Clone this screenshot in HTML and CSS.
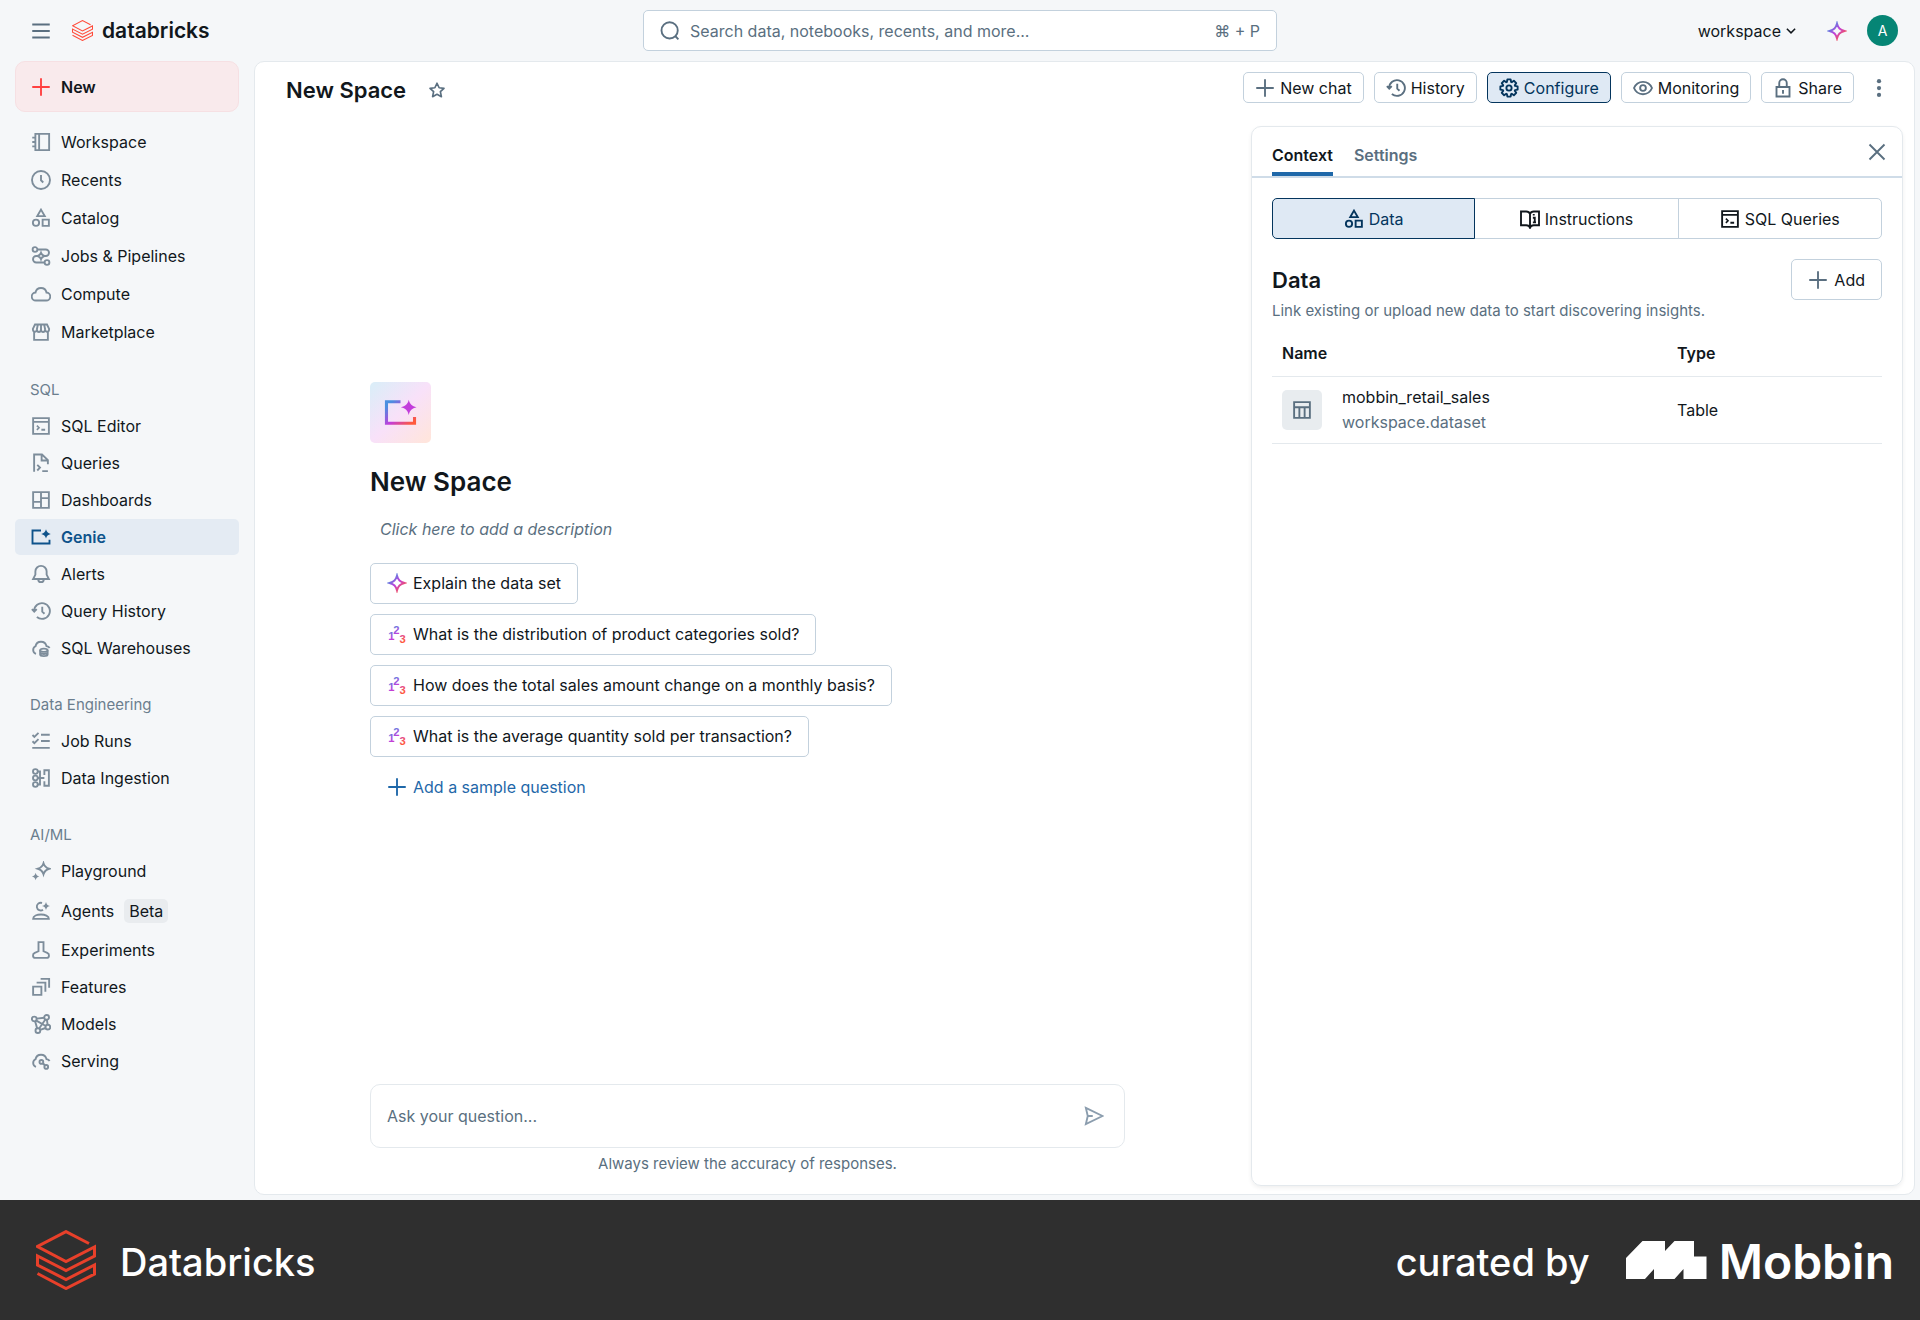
FILE: index.html
```html
<!DOCTYPE html>
<html lang="en">
<head>
<meta charset="utf-8">
<meta name="viewport" content="width=device-width, initial-scale=1">
<title>New Space - Databricks</title>
<link rel="stylesheet" href="styles.css">
</head>
<body>
<svg class="sprite" aria-hidden="true">
  <defs>
    <linearGradient id="ai" gradientUnits="userSpaceOnUse" x1="2" y1="2" x2="14" y2="14">
      <stop offset="0.1" stop-color="#4a8fe0"/><stop offset="0.5" stop-color="#c23ddb"/><stop offset="0.95" stop-color="#ff5a3c"/>
    </linearGradient>
    <symbol id="i-menu" viewBox="0 0 16 16"><path d="M1 2.800h14M1 8h14M1 13.200h14"/></symbol>
    <symbol id="i-brick" viewBox="0 0 60 60"><path stroke-width="3" d="M53 13.500 30 1.600 1.500 16.500 30 31.500 58.500 17v9L30 40.500 1.500 26v9L30 49.500 58.500 35v9L30 58.500 1.500 43.500"/></symbol>
    <symbol id="i-plus" viewBox="0 0 16 16"><path d="M8 1v14M1 8h14"/></symbol>
    <symbol id="i-notebook" viewBox="0 0 16 16"><path d="M3.500 1.500h11v13h-11zM6.500 1.500v13M1 4.500h2.500M1 8h2.500M1 11.500h2.500"/></symbol>
    <symbol id="i-clock" viewBox="0 0 16 16"><circle cx="8" cy="8" r="7.200"/><path d="M8 4v4.200l1.800 1.800"/></symbol>
    <symbol id="i-catalog" viewBox="0 0 16 16"><path d="M8 1.300 11 6.500H5zM9.300 9.300h5v5h-5z"/><circle cx="4" cy="11.800" r="2.500"/></symbol>
    <symbol id="i-jobs" viewBox="0 0 16 16"><circle cx="3.200" cy="2.800" r="1.900"/><circle cx="12.800" cy="13.200" r="1.900"/><path d="M5.100 2.800h6.700a2.600 2.600 0 0 1 0 5.200H11M5 8h-.8a2.600 2.600 0 0 0 0 5.200h6.700M8 5.500c.5 1.400 1.200 2 2.700 2.500-1.500.5-2.200 1.100-2.700 2.500-.5-1.400-1.200-2-2.700-2.500 1.500-.5 2.200-1.100 2.700-2.500z"/></symbol>
    <symbol id="i-cloud" viewBox="0 0 16 16"><path d="M4 13.200a3.200 3.200 0 0 1-.4-6.400 4.500 4.500 0 0 1 8.800 0 3.200 3.200 0 0 1-.4 6.400z"/></symbol>
    <symbol id="i-store" viewBox="0 0 16 16"><path d="M2.500 8v6.300h11V8M3.200 2h9.600l1.700 3.500c0 3-3.200 3-3.200.3 0 2.900-3.300 2.900-3.300 0 0 2.900-3.300 2.900-3.300 0 0 2.700-3.200 2.700-3.200-.3zM5.500 2l-.8 3.800M8 2v3.800M10.500 2l.8 3.800"/></symbol>
    <symbol id="i-editor" viewBox="0 0 16 16"><path d="M1.700 1.700h12.600v12.600H1.700zM1.700 4.700h12.600M8.300 11h3"/><path stroke-width="1.300" d="m4.700 7.700 1.700 1.700-1.700 1.700"/></symbol>
    <symbol id="i-query" viewBox="0 0 16 16"><path d="M2.500 15V1.200h6.300l4.700 4.500V9M8.500 1.500v4.500h4.700M5 9.500l2.200 2.200L5 14M9 14.500h4.500"/></symbol>
    <symbol id="i-dash" viewBox="0 0 16 16"><path d="M1.700 1.700h12.600v12.600H1.700zM8 1.700v12.600M1.700 9.500H8M8 6.500h6.300"/></symbol>
    <symbol id="i-genie" viewBox="0 0 16 16"><path d="M8 2.800H1.200v10.400h13.600v-3"/><path fill="currentColor" stroke="none" d="M12 1.800c.6 2.300 1.500 3 3.800 3.700-2.300.6-3.200 1.400-3.800 3.700-.6-2.300-1.500-3.100-3.800-3.700 2.300-.7 3.200-1.400 3.800-3.700z"/></symbol>
    <symbol id="i-bell" viewBox="0 0 16 16"><path d="M8 1.500a4.500 4.500 0 0 0-4.500 4.500v2.500L1.700 12h12.600l-1.800-3.500V6A4.500 4.500 0 0 0 8 1.500zM5.800 12.300a2.200 2.200 0 0 0 4.400 0"/></symbol>
    <symbol id="i-history" viewBox="0 0 16 16"><path d="M2.500 8a6.300 6.300 0 1 1 2.200 4.800M.7 6.500l1.900 2 2-2M9 4.500v4l1.800 1.700"/></symbol>
    <symbol id="i-warehouse" viewBox="0 0 16 16"><path d="M4 12.700a3.300 3.300 0 0 1-.4-6.100 4.500 4.500 0 0 1 8.800-.1c1.100.2 2 .7 2.500 1.500"/><ellipse cx="10.300" cy="9.800" rx="3" ry="1.300"/><path d="M7.300 9.800v3.400c0 1.700 6 1.700 6 0V9.800M7.300 11.800c.8 1.300 5.200 1.300 6 0"/></symbol>
    <symbol id="i-runs" viewBox="0 0 16 16"><path d="M8 3h7M8 8h7M1 13.500h14M1.200 3.200l1.500 1.500L6 1.500M1.200 8.200l1.500 1.500L6 6.500"/></symbol>
    <symbol id="i-ingest" viewBox="0 0 16 16"><circle cx="3.500" cy="2.800" r="1.900"/><circle cx="3.500" cy="8" r="1.900"/><circle cx="3.500" cy="13.200" r="1.900"/><path d="M5.400 2.800h1.800v10.400H5.400M5.500 8h5.200M10.700 10.500v3.700h3.600V1.800h-3.600v3.700"/></symbol>
    <symbol id="i-play" viewBox="0 0 16 16"><path d="M10 1.800c.8 2.600 1.900 3.600 4.500 4.400-2.600.8-3.700 1.800-4.500 4.400-.8-2.600-1.900-3.600-4.500-4.400 2.600-.8 3.700-1.800 4.500-4.400z"/><path fill="currentColor" stroke="none" d="M3.700 9.300c.5 1.900 1.100 2.500 3 3-1.900.5-2.500 1.100-3 3-.5-1.900-1.100-2.500-3-3 1.900-.5 2.500-1.100 3-3z"/></symbol>
    <symbol id="i-agent" viewBox="0 0 16 16"><path d="M8.800 1.600a3.100 3.100 0 1 0 .8 5.400M1.700 14.300c0-4.700 12.600-4.700 12.600 0z"/><path fill="currentColor" stroke="none" d="M12 .8c.5 2 1.200 2.700 3.200 3.200-2 .5-2.700 1.200-3.200 3.200-.5-2-1.200-2.700-3.200-3.200 2-.5 2.700-1.200 3.200-3.200z"/></symbol>
    <symbol id="i-flask" viewBox="0 0 16 16"><path d="M6 1.700h4V9l3 1.300c2.100 1 1.800 4-.5 4h-9c-2.300 0-2.600-3-.5-4L6 9z"/></symbol>
    <symbol id="i-features" viewBox="0 0 16 16"><path d="M1.700 7.700h6.600v6.600H1.700zM4.500 4.500h7v7.200M7.700 1.500h6.800v7"/></symbol>
    <symbol id="i-models" viewBox="0 0 16 16"><circle cx="2.600" cy="4" r="1.900"/><circle cx="12.500" cy="2.700" r="1.900"/><circle cx="13.500" cy="10.500" r="1.900"/><circle cx="5.500" cy="13.300" r="1.900"/><path d="M4.500 3.700l6.100-.7M12.700 4.600l.6 4M3.300 5.800l1.600 5.700M7.300 12.700l4.400-1.500M4.300 5.300l7.500 4.300M11.500 4.400l-5 7.200"/></symbol>
    <symbol id="i-serving" viewBox="0 0 16 16"><path d="M4 12.700a3.300 3.300 0 0 1-.4-6.100 4.500 4.500 0 0 1 8.800-.1c1.100.2 2 .7 2.500 1.500M9.500 9.800l2 2"/><circle cx="8.300" cy="8.700" r="1.500"/><circle cx="12.200" cy="12.700" r="1.500"/></symbol>
    <symbol id="i-search" viewBox="0 0 16 16"><circle cx="7.700" cy="7.500" r="6.500"/><path d="m12.200 12 2.500 2.700"/></symbol>
    <symbol id="i-down" viewBox="0 0 16 16"><path stroke-width="2" d="m2.500 5 5.500 5.500L13.500 5"/></symbol>
    <symbol id="i-spark" viewBox="0 0 16 16"><path d="M8 2c1 3.700 2.300 5 6 6-3.700 1-5 2.300-6 6-1-3.700-2.300-5-6-6 3.700-1 5-2.300 6-6z"/></symbol>
    <symbol id="i-star" viewBox="0 0 16 16"><path stroke-linejoin="round" d="m8 2 1.900 4 4.300.5-3.200 3 .9 4.400L8 11.800l-3.900 2.100.9-4.400-3.200-3L6.100 6z"/></symbol>
    <symbol id="i-gear" viewBox="0 0 16 16"><circle cx="8" cy="8" r="2.100"/><path stroke-linejoin="round" d="M12.800 6.300 14.900 6.700V9.300L12.800 9.700 12.600 10.200 13.800 11.900 11.900 13.800 10.200 12.600 9.700 12.800 9.300 14.900H6.700L6.300 12.800 5.800 12.600 4.100 13.800 2.200 11.900 3.400 10.200 3.200 9.700 1.100 9.300V6.700L3.200 6.300 3.400 5.800 2.200 4.100 4.100 2.200 5.800 3.400 6.300 3.200 6.700 1.100H9.300L9.700 3.200 10.200 3.400 11.900 2.200 13.800 4.100 12.600 5.800z"/></symbol>
    <symbol id="i-eye" viewBox="0 0 16 16"><path d="M.8 8C3.500 1.400 12.500 1.400 15.200 8 12.500 14.600 3.500 14.600.8 8z"/><circle cx="8" cy="8" r="2.300"/></symbol>
    <symbol id="i-lock" viewBox="0 0 16 16"><path d="M2.800 7.200h10.400v7.600H2.800zM5 7V4a3 3 0 0 1 6 0v3M8 9.500v3"/></symbol>
    <symbol id="i-dots" viewBox="0 0 16 16"><g fill="currentColor" stroke="none"><circle cx="8" cy="2.500" r="1.700"/><circle cx="8" cy="8" r="1.700"/><circle cx="8" cy="13.500" r="1.700"/></g></symbol>
    <symbol id="i-close" viewBox="0 0 16 16"><path d="m2 2 12 12M14 2 2 14"/></symbol>
    <symbol id="i-book" viewBox="0 0 16 16"><path d="M8 4c-.5-1.500-1.500-2-3-2H.8v11H5c1.700 0 2.500.5 3 2 .5-1.500 1.300-2 3-2h4.200V2H11c-1.500 0-2.500.5-3 2zM8 4v11M10.300 7h1.500v3.700M12.800 10.700h-2.500M11 5.200V4"/></symbol>
    <symbol id="i-table" viewBox="0 0 16 16"><path d="M1.700 1.700h12.600v12.600H1.700zM1.700 5.800h12.600M5.900 5.800v8.500M10.100 5.800v8.500"/></symbol>
    <symbol id="i-123" viewBox="0 0 16 16"><g class="digits"><text x="1" y="13">1</text><text x="5" y="8">2</text><text x="10" y="15">3</text></g></symbol>
    <symbol id="i-send" viewBox="0 0 16 16"><path d="M1.500 1.500 14.800 8 1.500 14.500 3 8zM3 8h4"/></symbol>
  </defs>
</svg>

<div class="app">
  <header class="topbar">
    <div class="brand">
      <button class="plain menu" aria-label="Toggle navigation"><svg class="icon"><use href="#i-menu"/></svg></button>
      <a class="logo" href="#"><svg class="icon brick"><use href="#i-brick"/></svg><span>databricks</span></a>
    </div>
    <label class="search">
      <svg class="icon"><use href="#i-search"/></svg>
      <input type="text" aria-label="Search" placeholder="Search data, notebooks, recents, and more...">
      <span>⌘ + P</span>
    </label>
    <div class="account">
      <button class="plain switcher">workspace <svg class="icon tiny"><use href="#i-down"/></svg></button>
      <button class="plain assistant" aria-label="Assistant"><svg class="icon gradient"><use href="#i-spark"/></svg></button>
      <button class="avatar" aria-label="Account">A</button>
    </div>
  </header>

  <div class="body">
    <nav class="sidebar">
      <button class="new"><svg class="icon"><use href="#i-plus"/></svg>New</button>
      <div class="group roomy">
        <a href="#"><svg class="icon"><use href="#i-notebook"/></svg>Workspace</a>
        <a href="#"><svg class="icon"><use href="#i-clock"/></svg>Recents</a>
        <a href="#"><svg class="icon"><use href="#i-catalog"/></svg>Catalog</a>
        <a href="#"><svg class="icon"><use href="#i-jobs"/></svg>Jobs &amp; Pipelines</a>
        <a href="#"><svg class="icon"><use href="#i-cloud"/></svg>Compute</a>
        <a href="#"><svg class="icon"><use href="#i-store"/></svg>Marketplace</a>
      </div>
      <div class="group">
        <h2>SQL</h2>
        <a href="#"><svg class="icon"><use href="#i-editor"/></svg>SQL Editor</a>
        <a href="#"><svg class="icon"><use href="#i-query"/></svg>Queries</a>
        <a href="#"><svg class="icon"><use href="#i-dash"/></svg>Dashboards</a>
        <a href="#" class="current" aria-current="page"><svg class="icon"><use href="#i-genie"/></svg>Genie</a>
        <a href="#"><svg class="icon"><use href="#i-bell"/></svg>Alerts</a>
        <a href="#"><svg class="icon"><use href="#i-history"/></svg>Query History</a>
        <a href="#"><svg class="icon"><use href="#i-warehouse"/></svg>SQL Warehouses</a>
      </div>
      <div class="group">
        <h2>Data Engineering</h2>
        <a href="#"><svg class="icon"><use href="#i-runs"/></svg>Job Runs</a>
        <a href="#"><svg class="icon"><use href="#i-ingest"/></svg>Data Ingestion</a>
      </div>
      <div class="group">
        <h2>AI/ML</h2>
        <a href="#"><svg class="icon"><use href="#i-play"/></svg>Playground</a>
        <a href="#" class="tagged"><svg class="icon"><use href="#i-agent"/></svg>Agents <span class="tag">Beta</span></a>
        <a href="#"><svg class="icon"><use href="#i-flask"/></svg>Experiments</a>
        <a href="#"><svg class="icon"><use href="#i-features"/></svg>Features</a>
        <a href="#"><svg class="icon"><use href="#i-models"/></svg>Models</a>
        <a href="#"><svg class="icon"><use href="#i-serving"/></svg>Serving</a>
      </div>
    </nav>

    <main class="card">
      <div class="titlebar">
        <h1>New Space</h1>
        <button class="plain star" aria-label="Add to favorites"><svg class="icon small"><use href="#i-star"/></svg></button>
        <div class="actions">
          <button class="btn compact"><svg class="icon"><use href="#i-plus"/></svg>New chat</button>
          <button class="btn compact"><svg class="icon"><use href="#i-history"/></svg>History</button>
          <button class="btn compact active" aria-pressed="true"><svg class="icon"><use href="#i-gear"/></svg>Configure</button>
          <button class="btn compact"><svg class="icon"><use href="#i-eye"/></svg>Monitoring</button>
          <button class="btn compact"><svg class="icon"><use href="#i-lock"/></svg>Share</button>
          <button class="plain more" aria-label="More actions"><svg class="icon"><use href="#i-dots"/></svg></button>
        </div>
      </div>

      <div class="workarea">
        <section class="chat">
          <div class="welcome">
            <div class="badge"><svg class="icon gradient"><use href="#i-genie"/></svg></div>
            <h2>New Space</h2>
            <p class="about">Click here to add a description</p>
            <div class="prompts">
              <button class="btn"><svg class="icon gradient"><use href="#i-spark"/></svg>Explain the data set</button>
              <button class="btn"><svg class="icon gradient"><use href="#i-123"/></svg>What is the distribution of product categories sold?</button>
              <button class="btn"><svg class="icon gradient"><use href="#i-123"/></svg>How does the total sales amount change on a monthly basis?</button>
              <button class="btn"><svg class="icon gradient"><use href="#i-123"/></svg>What is the average quantity sold per transaction?</button>
              <button class="btn link"><svg class="icon"><use href="#i-plus"/></svg>Add a sample question</button>
            </div>
          </div>
          <form class="composer">
            <input type="text" aria-label="Question" placeholder="Ask your question...">
            <button type="button" class="plain" aria-label="Send"><svg class="icon"><use href="#i-send"/></svg></button>
          </form>
          <p class="notice">Always review the accuracy of responses.</p>
        </section>

        <aside class="panel">
          <div class="tabs" role="tablist">
            <button class="tab selected" role="tab" aria-selected="true">Context</button>
            <button class="tab" role="tab" aria-selected="false">Settings</button>
            <button class="plain close" aria-label="Close panel"><svg class="icon"><use href="#i-close"/></svg></button>
          </div>
          <div class="panel-body">
            <div class="segments">
              <button class="segment active" aria-pressed="true"><svg class="icon"><use href="#i-catalog"/></svg>Data</button>
              <button class="segment"><svg class="icon"><use href="#i-book"/></svg>Instructions</button>
              <button class="segment"><svg class="icon"><use href="#i-editor"/></svg>SQL Queries</button>
            </div>
            <div class="section-head">
              <h2>Data</h2>
              <button class="btn"><svg class="icon"><use href="#i-plus"/></svg>Add</button>
            </div>
            <p class="hint">Link existing or upload new data to start discovering insights.</p>
            <table>
              <thead><tr><th scope="col">Name</th><th scope="col">Type</th></tr></thead>
              <tbody>
                <tr>
                  <td>
                    <div class="source">
                      <span class="tile"><svg class="icon"><use href="#i-table"/></svg></span>
                      <div><div>mobbin_retail_sales</div><div class="muted">workspace.dataset</div></div>
                    </div>
                  </td>
                  <td>Table</td>
                </tr>
              </tbody>
            </table>
          </div>
        </aside>
      </div>
    </main>
  </div>
</div>

<footer class="credits">
  <svg class="icon credit-logo"><use href="#i-brick"/></svg>
  <span class="credit-name">Databricks</span>
  <span class="curated">curated by</span>
  <svg class="mobbin-mark" viewBox="0 0 81 38" aria-hidden="true"><path d="M0 17 16.500 0H39v10L48.500 0H68v15.500h12.500V38h-23V28L48.500 38H28V28L19 38H0z"/></svg>
  <span class="mobbin">Mobbin</span>
</footer>
</body>
</html>
```
FILE: styles.css
```css
:root {
  --ink: #11171c;
  --muted: #5a6f80;
  --line: #c3d1dd;
  --hairline: #e4e9ed;
  --navy: #04355d;
  --blue: #1f68a9;
  --selected: #dfe9f4;
}

* { box-sizing: border-box; }

body {
  margin: 0;
  min-height: 100vh;
  display: flex;
  flex-direction: column;
  background: #f5f7f9;
  color: var(--ink);
  font: 16px/24px Inter, "Liberation Sans", sans-serif;
}

h1, h2, p { margin: 0; }
button, input { font: inherit; color: inherit; }
button { cursor: pointer; }
a { color: inherit; text-decoration: none; }

.sprite { position: absolute; width: 0; height: 0; }

.icon {
  width: 20px;
  height: 20px;
  flex: none;
  fill: none;
  stroke: currentColor;
  stroke-width: 1.5px;
}
.icon.small { width: 18px; height: 18px; }
.icon.tiny { width: 12px; height: 12px; }
.icon.gradient { stroke: url(#ai); }
.btn .icon.gradient, .gradient { color: #c23ddb; }
.digits {
  font: 700 9px "Liberation Sans", sans-serif;
  fill: url(#ai);
  stroke: none;
}

.plain {
  display: flex;
  align-items: center;
  padding: 0;
  border: 0;
  background: none;
  color: var(--muted);
}

/* Shell */
.app { flex: 1; display: flex; flex-direction: column; }
.body { flex: 1; display: flex; padding: 0 5px 5px 0; }

.topbar {
  height: 61px;
  display: grid;
  grid-template-columns: 1fr minmax(300px, 634px) 1fr;
  align-items: center;
  padding: 0 22px;
}
.brand, .logo, .account { display: flex; align-items: center; }
.brand { gap: 21px; padding-left: 9px; }
.logo { gap: 9px; font-size: 21px; font-weight: 600; }
.brick { width: 21px; height: 21px; color: #ff4b3a; }
.account { justify-content: flex-end; }
.switcher { gap: 4px; color: var(--ink); }
.assistant { margin: 0 20px 0 30px; }
.avatar {
  width: 31px;
  height: 31px;
  padding: 0;
  border: 0;
  border-radius: 50%;
  background: #068575;
  color: #fff;
  font-size: 14px;
}
.search {
  height: 41px;
  display: flex;
  align-items: center;
  gap: 10px;
  padding: 0 16px;
  border: 1px solid var(--line);
  border-radius: 5px;
  background: #fff;
  color: var(--muted);
}
input {
  flex: 1;
  min-width: 0;
  padding: 0;
  border: 0;
  outline: 0;
  background: none;
}
input::placeholder { color: var(--muted); opacity: 1; }

/* Sidebar */
.sidebar { width: 254px; flex: none; padding: 0 15px; }
.sidebar .icon { color: #7d8d9b; }
.sidebar .new .icon { color: #ff4040; }
.new {
  width: 100%;
  height: 51px;
  display: flex;
  align-items: center;
  gap: 10px;
  margin-bottom: 11px;
  padding: 0 15px;
  border: 1px solid #f6e0e3;
  border-radius: 10px;
  background: #f9eaec;
  font-weight: 600;
}
.group a {
  height: 36px;
  display: flex;
  align-items: center;
  gap: 10px;
  margin-bottom: 1px;
  padding: 0 16px;
  border-radius: 5px;
}
.roomy a { height: 38px; margin: 0; }
.group + .group { margin-top: 20px; }
.group h2 {
  padding: 0 15px;
  font-size: 15px;
  font-weight: 400;
  line-height: 37px;
  color: #6b7e8e;
}
.group .current { background: #e4ebf3; color: #0e538b; font-weight: 600; }
.sidebar .current .icon { color: #0e538b; }
.group .tagged { height: 41px; }
.tag { padding: 0 5px; border-radius: 5px; background: #e9ecef; }

/* Main card */
.card {
  flex: 1;
  min-width: 0;
  display: flex;
  flex-direction: column;
  border: 1px solid var(--hairline);
  border-radius: 10px;
  background: #fff;
}
.titlebar {
  height: 64px;
  display: flex;
  align-items: flex-start;
  padding: 10px 25px 0 31px;
}
.titlebar h1 { font-size: 22px; line-height: 36px; font-weight: 600; }
.star { height: 36px; margin-left: 22px; }
.actions { display: flex; gap: 10px; margin-left: auto; }
.more { margin-left: 5px; }

.btn {
  height: 41px;
  display: inline-flex;
  align-items: center;
  gap: 6px;
  padding: 0 16px;
  border: 1px solid var(--line);
  border-radius: 5px;
  background: #fff;
  white-space: nowrap;
}
.btn .icon { color: var(--muted); }
.btn.compact { height: 31px; padding: 0 11px; gap: 5px; }
.btn.active { border-color: var(--navy); background: var(--selected); color: var(--navy); }
.btn.active .icon { color: var(--navy); }
.btn.link { border-color: transparent; color: var(--blue); }
.btn.link .icon { color: var(--blue); }

.workarea { flex: 1; display: flex; gap: 11px; padding: 0 11px 8px 0; }

/* Chat */
.chat {
  flex: 1;
  min-width: 0;
  display: flex;
  flex-direction: column;
  align-items: center;
  padding: 0 20px 10px;
}
.chat > * { width: 100%; max-width: 755px; }
.welcome { flex: 1; display: flex; flex-direction: column; justify-content: center; padding-bottom: 21px; }
.badge {
  width: 61px;
  height: 61px;
  display: grid;
  place-items: center;
  border-radius: 5px;
  background: linear-gradient(135deg, #dcedf8 5%, #f8e1f9 50%, #ffe5dd 95%);
}
.badge .icon { width: 33px; height: 33px; }
.welcome h2 { margin-top: 20px; font-size: 26px; line-height: 38px; font-weight: 600; }
.about { margin: 16px 10px 22px; font-style: italic; color: var(--muted); }
.prompts { display: flex; flex-direction: column; align-items: flex-start; gap: 10px; }
.composer {
  height: 64px;
  display: flex;
  align-items: center;
  padding: 0 20px 0 16px;
  border: 1px solid var(--hairline);
  border-radius: 10px;
}
.composer .icon { color: #8b9dae; }
.notice { margin-top: 4px; font-size: 15px; text-align: center; color: var(--muted); }

/* Configuration panel */
.panel {
  width: 652px;
  flex: none;
  border: 1px solid var(--hairline);
  border-radius: 10px;
  box-shadow: 0 2px 4px #00000010;
}
.tabs {
  height: 51px;
  display: flex;
  gap: 21px;
  padding: 0 15px 0 20px;
  border-bottom: 2px solid #cfdce8;
}
.tab {
  padding: 10px 0 0;
  border: 0;
  border-bottom: 4px solid transparent;
  background: none;
  color: var(--muted);
  font-weight: 600;
}
.tab.selected { border-color: var(--blue); color: var(--ink); }
.close { margin-left: auto; }
.panel-body { padding: 20px; }
.segments { display: grid; grid-template-columns: repeat(3, 1fr); }
.segment {
  height: 41px;
  display: flex;
  align-items: center;
  justify-content: center;
  gap: 5px;
  margin-left: -1px;
  border: 1px solid var(--line);
  background: #fff;
}
.segment:first-child { margin-left: 0; border-radius: 5px 0 0 5px; }
.segment:last-child { border-radius: 0 5px 5px 0; }
.segment.active { z-index: 1; border-color: var(--navy); background: var(--selected); color: var(--navy); }
.section-head { display: flex; align-items: center; justify-content: space-between; margin-top: 20px; }
.section-head h2 { font-size: 22px; font-weight: 600; }
.hint { font-size: 15px; line-height: 22px; color: var(--muted); }
table { width: 100%; margin-top: 8px; border-collapse: collapse; table-layout: fixed; }
th, td { padding: 0 10px; text-align: left; border-bottom: 1px solid var(--hairline); }
th { height: 46px; font-weight: 600; }
td { height: 67px; }
th:first-child { width: 395px; }
.source { display: flex; align-items: center; gap: 20px; line-height: 25px; }
.tile {
  width: 40px;
  height: 40px;
  display: grid;
  place-items: center;
  border-radius: 5px;
  background: #e8ecef;
  color: var(--muted);
}
.muted { color: var(--muted); }

/* Credits */
.credits {
  height: 120px;
  display: flex;
  align-items: center;
  padding: 0 26px 0 36px;
  background: #2f2f2f;
  color: #fff;
  line-height: 60px;
}
.credit-logo { width: 60px; height: 60px; color: #e8402a; }
.credit-name, .curated, .mobbin { padding-top: 4px; }
.credit-name, .curated { font-size: 38px; font-weight: 500; }
.credit-name { margin-left: 24px; }
.curated { margin-left: auto; }
.mobbin-mark { width: 81px; height: 38px; margin: 0 12px 0 36px; fill: #fff; }
.mobbin { font-size: 48px; font-weight: 600; }
```
